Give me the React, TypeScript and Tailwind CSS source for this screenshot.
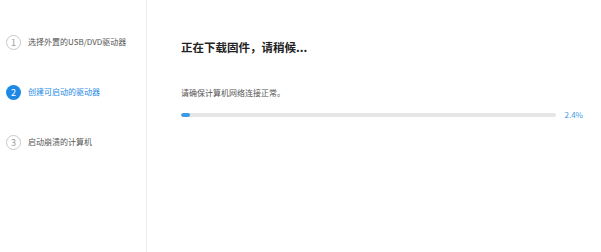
const font = { fontFamily: '"Noto Sans CJK SC", "Noto Sans", sans-serif' };

type Step = { n: number; label: string; active?: boolean };

const steps: Step[] = [
  { n: 1, label: "选择外置的USB/DVD驱动器" },
  { n: 2, label: "创建可启动的驱动器", active: true },
  { n: 3, label: "启动崩溃的计算机" },
];

function StepRow({ step }: { step: Step }) {
  return (
    <div className="flex items-center h-[16px]">
      <div
        className={
          step.active
            ? "w-[15px] h-[15px] rounded-full bg-[#1e88e5] text-white flex items-center justify-center text-[9px] leading-none"
            : "w-[15px] h-[15px] rounded-full border border-[#c8c8c8] text-[#9a9a9a] flex items-center justify-center text-[9px] leading-none"
        }
      >
        {step.n}
      </div>
      <span
        className={
          step.active
            ? "ml-[7px] text-[8px] leading-none text-[#1e88e5]"
            : "ml-[7px] text-[8px] leading-none text-[#555555]"
        }
      >
        {step.label}
      </span>
    </div>
  );
}

export default function App() {
  const progress = 2.4;
  return (
    <div className="w-[601px] h-[252px] bg-white flex" style={font}>
      <div className="w-[147px] h-full border-r border-[#ededed] pl-[6px] pt-[34px] flex flex-col gap-[34px]">
        {steps.map((s) => (
          <StepRow key={s.n} step={s} />
        ))}
      </div>
      <div className="flex-1 pl-[34px] pr-[18px] pt-[38px]">
        <h1 className="text-[11.5px] font-bold leading-[18px] text-[#222222]">正在下载固件，请稍候...</h1>
        <p className="mt-[32px] text-[8px] leading-[10px] text-[#555555]">请确保计算机网络连接正常。</p>
        <div className="mt-[13px] flex items-center">
          <div className="flex-1 h-[4px] rounded-full bg-[#e6e6e6] overflow-hidden">
            <div className="h-full rounded-full bg-[#3b9be6]" style={{ width: `${progress}%` }} />
          </div>
          <span className="ml-[9px] text-[8px] leading-none text-[#3b9be6]">2.4%</span>
        </div>
      </div>
    </div>
  );
}
